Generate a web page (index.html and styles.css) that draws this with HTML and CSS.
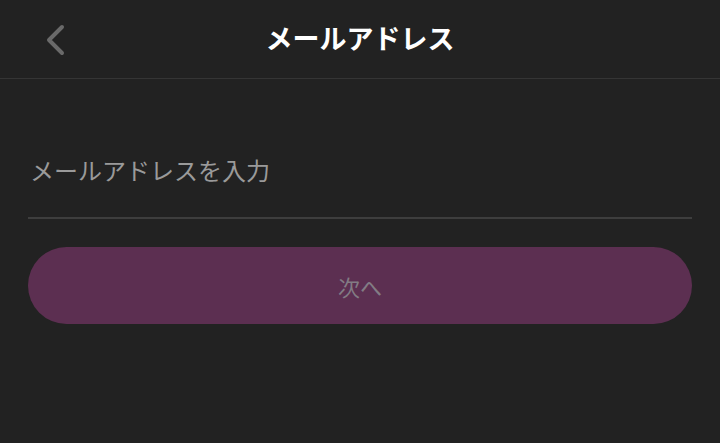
FILE: index.html
```html
<!DOCTYPE html>
<html lang="ja">
<head>
<meta charset="utf-8">
<link rel="stylesheet" href="styles.css">
</head>
<body>
<div class="screen">
  <header class="header">
    <button class="back" aria-label="戻る">
      <svg width="26" height="32" viewBox="0 0 26 32"><path d="M20 3 L7 16 L20 29" fill="none" stroke="#6a6a6a" stroke-width="4" stroke-linecap="round" stroke-linejoin="round"/></svg>
    </button>
    <h1 class="title">メールアドレス</h1>
  </header>
  <main class="content">
    <div class="field">
      <span class="placeholder">メールアドレスを入力</span>
    </div>
    <button class="next">次へ</button>
  </main>
</div>
</body>
</html>
```
FILE: styles.css
```css
* { box-sizing: border-box; }
html, body { margin: 0; padding: 0; }
body {
  background: #222222;
  font-family: "Noto Sans CJK JP", "Noto Sans", sans-serif;
  width: 720px;
  height: 443px;
  overflow: hidden;
}
.header {
  height: 79px;
  border-bottom: 1px solid #353535;
  display: flex;
  align-items: center;
  justify-content: center;
  position: relative;
}
.back {
  position: absolute;
  left: 42px;
  top: 24px;
  background: none;
  border: 0;
  padding: 0;
  width: 26px;
  height: 32px;
}
.back svg { display: block; }
.title {
  margin: 0;
  color: #ffffff;
  font-size: 27px;
  font-weight: 700;
  line-height: 1;
  padding-bottom: 4px;
}
.content {
  padding: 0 28px;
}
.field {
  height: 140px;
  border-bottom: 2px solid #3e3e3e;
  display: flex;
  align-items: flex-end;
  padding-bottom: 35px;
}
.placeholder {
  color: #9a9a9a;
  font-size: 24px;
  line-height: 1;
  padding-left: 2px;
}
.next {
  margin-top: 28px;
  width: 100%;
  height: 77px;
  border: 0;
  border-radius: 39px;
  background: #5c2f51;
  color: #827c84;
  font-family: "Noto Sans CJK JP", "Noto Sans", sans-serif;
  font-size: 22px;
  display: flex;
  align-items: center;
  justify-content: center;
}
```
